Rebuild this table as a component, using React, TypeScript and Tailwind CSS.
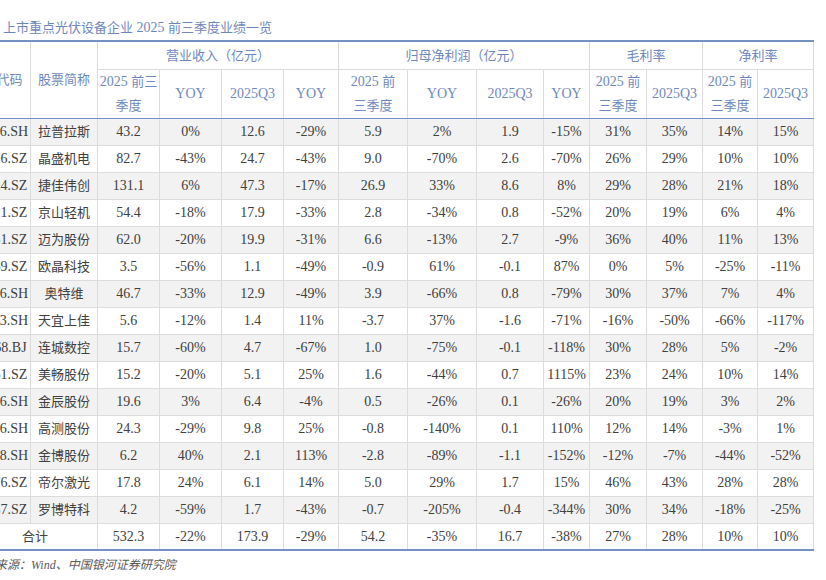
const rows: [string, string, string[]][] = [
  ["688726.SH", "拉普拉斯", ["43.2", "0%", "12.6", "-29%", "5.9", "2%", "1.9", "-15%", "31%", "35%", "14%", "15%"]],
  ["300316.SZ", "晶盛机电", ["82.7", "-43%", "24.7", "-43%", "9.0", "-70%", "2.6", "-70%", "26%", "29%", "10%", "10%"]],
  ["300724.SZ", "捷佳伟创", ["131.1", "6%", "47.3", "-17%", "26.9", "33%", "8.6", "8%", "29%", "28%", "21%", "18%"]],
  ["000821.SZ", "京山轻机", ["54.4", "-18%", "17.9", "-33%", "2.8", "-34%", "0.8", "-52%", "20%", "19%", "6%", "4%"]],
  ["300751.SZ", "迈为股份", ["62.0", "-20%", "19.9", "-31%", "6.6", "-13%", "2.7", "-9%", "36%", "40%", "11%", "13%"]],
  ["001269.SZ", "欧晶科技", ["3.5", "-56%", "1.1", "-49%", "-0.9", "61%", "-0.1", "87%", "0%", "5%", "-25%", "-11%"]],
  ["688516.SH", "奥特维", ["46.7", "-33%", "12.9", "-49%", "3.9", "-66%", "0.8", "-79%", "30%", "37%", "7%", "4%"]],
  ["688033.SH", "天宜上佳", ["5.6", "-12%", "1.4", "11%", "-3.7", "37%", "-1.6", "-71%", "-16%", "-50%", "-66%", "-117%"]],
  ["920368.BJ", "连城数控", ["15.7", "-60%", "4.7", "-67%", "1.0", "-75%", "-0.1", "-118%", "30%", "28%", "5%", "-2%"]],
  ["300861.SZ", "美畅股份", ["15.2", "-20%", "5.1", "25%", "1.6", "-44%", "0.7", "1115%", "23%", "24%", "10%", "14%"]],
  ["603396.SH", "金辰股份", ["19.6", "3%", "6.4", "-4%", "0.5", "-26%", "0.1", "-26%", "20%", "19%", "3%", "2%"]],
  ["688556.SH", "高测股份", ["24.3", "-29%", "9.8", "25%", "-0.8", "-140%", "0.1", "110%", "12%", "14%", "-3%", "1%"]],
  ["688598.SH", "金博股份", ["6.2", "40%", "2.1", "113%", "-2.8", "-89%", "-1.1", "-152%", "-12%", "-7%", "-44%", "-52%"]],
  ["300776.SZ", "帝尔激光", ["17.8", "24%", "6.1", "14%", "5.0", "29%", "1.7", "15%", "46%", "43%", "28%", "28%"]],
  ["300757.SZ", "罗博特科", ["4.2", "-59%", "1.7", "-43%", "-0.7", "-205%", "-0.4", "-344%", "30%", "34%", "-18%", "-25%"]],
];

const total = ["532.3", "-22%", "173.9", "-29%", "54.2", "-35%", "16.7", "-38%", "27%", "28%", "10%", "10%"];

const widths = [68, 67, 62, 62, 62, 55, 69, 69, 67, 46, 57, 56, 55, 56];

const font = { fontFamily: '"Liberation Serif", "Noto Sans CJK SC", serif' };

function Zh({ children }: { children: React.ReactNode }) {
  return <span className="text-[13px]">{children}</span>;
}

export default function App() {
  const th = "border border-[#dcdcdc] text-[#6f88bb] font-normal p-0 text-center text-[14px]";
  const td = "border border-[#dcdcdc] text-[#404040] p-0 text-center text-[14px]";

  return (
    <div className="w-[826px] h-[580px] bg-white overflow-hidden" style={font}>
      <div className="pt-[18px] pl-[3px] h-[40px] text-[14px] leading-[20px] text-[#6f88bb]">
        <Zh>上市重点光伏设备企业</Zh> 2025 <Zh>前三季度业绩一览</Zh>
      </div>

      <table className="table-fixed border-collapse ml-[-38px] w-[851px] border-t-2 border-b-2 border-t-[#7590c4] border-b-[#7590c4]">
        <colgroup>
          {widths.map((w, i) => (
            <col key={i} style={{ width: w }} />
          ))}
        </colgroup>
        <thead>
          <tr className="h-[28px]">
            <th rowSpan={2} className={th + " border-t-0 border-b-[#7590c4]"}>
              <Zh>股票代码</Zh>
            </th>
            <th rowSpan={2} className={th + " border-t-0 border-b-[#7590c4]"}>
              <Zh>股票简称</Zh>
            </th>
            <th colSpan={4} className={th + " border-t-0"}>
              <Zh>营业收入（亿元）</Zh>
            </th>
            <th colSpan={4} className={th + " border-t-0"}>
              <Zh>归母净利润（亿元）</Zh>
            </th>
            <th colSpan={2} className={th + " border-t-0"}>
              <Zh>毛利率</Zh>
            </th>
            <th colSpan={2} className={th + " border-t-0"}>
              <Zh>净利率</Zh>
            </th>
          </tr>
          <tr className="h-[48px] leading-[24px]">
            <th className={th + " border-b-[#7590c4]"}>
              2025 <Zh>前三</Zh>
              <br />
              <Zh>季度</Zh>
            </th>
            <th className={th + " border-b-[#7590c4]"}>YOY</th>
            <th className={th + " border-b-[#7590c4]"}>2025Q3</th>
            <th className={th + " border-b-[#7590c4]"}>YOY</th>
            <th className={th + " border-b-[#7590c4]"}>
              2025 <Zh>前</Zh>
              <br />
              <Zh>三季度</Zh>
            </th>
            <th className={th + " border-b-[#7590c4]"}>YOY</th>
            <th className={th + " border-b-[#7590c4]"}>2025Q3</th>
            <th className={th + " border-b-[#7590c4]"}>YOY</th>
            <th className={th + " border-b-[#7590c4]"}>
              2025 <Zh>前</Zh>
              <br />
              <Zh>三季度</Zh>
            </th>
            <th className={th + " border-b-[#7590c4]"}>2025Q3</th>
            <th className={th + " border-b-[#7590c4]"}>
              2025 <Zh>前</Zh>
              <br />
              <Zh>三季度</Zh>
            </th>
            <th className={th + " border-b-[#7590c4]"}>2025Q3</th>
          </tr>
        </thead>
        <tbody>
          {rows.map(([code, name, vals], i) => (
            <tr key={code} className={"h-[27px] " + (i % 2 === 0 ? "bg-[#f2f2f2]" : "bg-white")}>
              <td className={td}>{code}</td>
              <td className={td}>
                <Zh>{name}</Zh>
              </td>
              {vals.map((v, j) => (
                <td key={j} className={td}>
                  {v}
                </td>
              ))}
            </tr>
          ))}
          <tr className="h-[27px] bg-white">
            <td colSpan={2} className={td + " border-b-[#7590c4]"}>
              <span className="pl-[10px]">
                <Zh>合计</Zh>
              </span>
            </td>
            {total.map((v, j) => (
              <td key={j} className={td + " border-b-[#7590c4]"}>
                {v}
              </td>
            ))}
          </tr>
        </tbody>
      </table>

      <div className="mt-[5px] ml-[-29px] text-[12px] leading-[18px] italic text-[#595959]">
        资料来源：Wind、中国银河证券研究院
      </div>
    </div>
  );
}
